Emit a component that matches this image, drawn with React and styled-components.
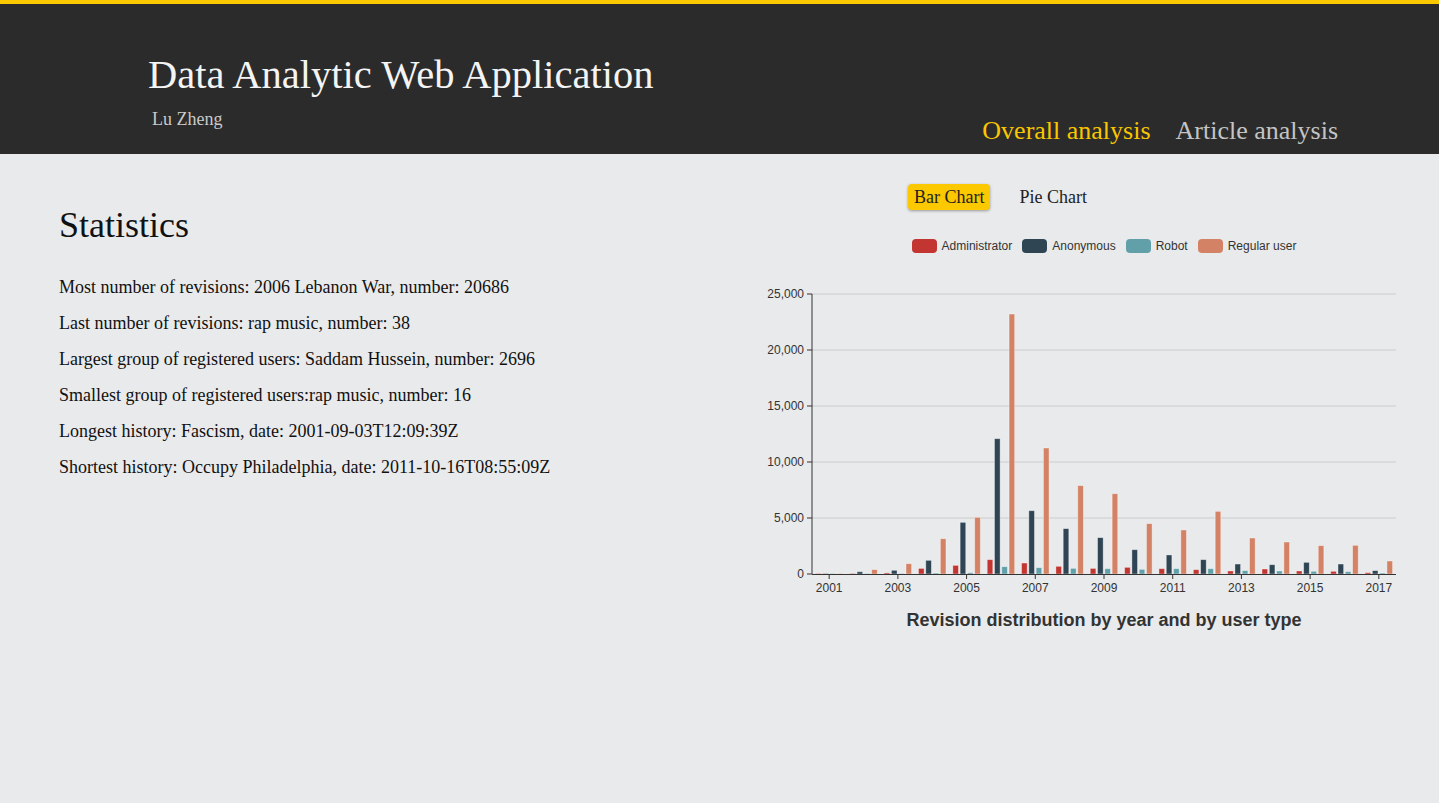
import React from 'react';
import styled, { createGlobalStyle } from 'styled-components';

const GlobalStyle = createGlobalStyle`
    html, body {
        margin: 0;
        padding: 0;
        background: #e9eaec;
        font-family: "Liberation Serif", "Times New Roman", serif;
        overflow: hidden;
    }
`;

const Page = styled.div`
    min-height: 100vh;
    background: #e9eaec;
`;

const Header = styled.header`
    border-top: 4px solid #fcc800;
    background-color: #2b2b2b;
    height: 154px;
    box-sizing: border-box;
    padding: 0 101px 0 148px;
    display: flex;
    justify-content: space-between;
    align-items: flex-end;
`;

const Brand = styled.div`
    align-self: flex-start;
    padding-top: 51px;
`;

const Title = styled.h1`
    margin: 0;
    font-weight: normal;
    font-size: 40.5px;
    line-height: 40px;
    color: #f4f4f4;
`;

const Author = styled.div`
    margin: 15px 0 0 4px;
    font-size: 18px;
    line-height: 18px;
    color: #c9c9c9;
`;

const Nav = styled.nav`
    display: flex;
    gap: 25px;
    padding-bottom: 10px;
`;

const NavLink = styled.a`
    font-size: 26px;
    line-height: 26px;
    color: ${({ active }) => (active ? '#f9c700' : '#c4c4c4')};
    cursor: pointer;
`;

const Main = styled.main`
    display: grid;
    grid-template-columns: 739px 1fr;
`;

const StatsColumn = styled.section`
    padding: 51px 0 0 59px;
`;

const StatsHeader = styled.h2`
    margin: 0 0 29px;
    font-weight: normal;
    font-size: 36px;
    line-height: 40px;
    color: #111;
`;

const StatsList = styled.div`
    display: flex;
    flex-direction: column;
    gap: 10px;
`;

const StatLine = styled.p`
    margin: 0;
    font-size: 18px;
    line-height: 26px;
    color: #111;
`;

const ChartColumn = styled.section`
    overflow: hidden;
    padding-top: 30px;
`;

const ChartArea = styled.div`
    width: 730px;
`;

const Tabs = styled.div`
    display: flex;
    gap: 23px;
    padding-left: 169px;
`;

const TabButton = styled.button`
    font-family: "Liberation Serif", "Times New Roman", serif;
    font-size: 18px;
    line-height: 26px;
    height: 26px;
    padding: 0 6px;
    border: none;
    border-radius: 4px;
    color: #222;
    background: ${({ active }) => (active ? '#fcc900' : 'transparent')};
    box-shadow: ${({ active }) => (active ? '0 1px 3px rgba(0, 0, 0, 0.35)' : 'none')};
    cursor: pointer;
`;

const Legend = styled.div`
    display: flex;
    justify-content: center;
    gap: 10px;
    margin-top: 29px;
    height: 14px;
`;

const LegendItem = styled.div`
    display: flex;
    align-items: center;
    gap: 5px;
    font-family: "Liberation Sans", Arial, sans-serif;
    font-size: 12px;
    color: #333;
`;

const Swatch = styled.span`
    width: 25px;
    height: 14px;
    border-radius: 4px;
    background: ${({ color }) => color};
`;

const ChartSvg = styled.svg`
    display: block;
    margin-top: 27px;
    font-family: "Liberation Sans", Arial, sans-serif;
`;

const ChartTitle = styled.div`
    margin-top: 9px;
    text-align: center;
    font-family: "Liberation Sans", Arial, sans-serif;
    font-weight: bold;
    font-size: 18px;
    line-height: 22px;
    color: #333;
`;

const series = [
    { name: 'Administrator', color: '#c23531', data: [5, 20, 100, 500, 770, 1280, 980, 685, 500, 595, 475, 385, 270, 445, 270, 240, 120] },
    { name: 'Anonymous', color: '#2f4554', data: [10, 200, 330, 1220, 4610, 12080, 5650, 4050, 3245, 2170, 1700, 1280, 890, 830, 1040, 890, 300] },
    { name: 'Robot', color: '#61a0a8', data: [5, 10, 10, 90, 120, 650, 565, 505, 475, 415, 475, 475, 300, 270, 240, 210, 90] },
    { name: 'Regular user', color: '#d48265', data: [30, 390, 920, 3150, 5060, 23210, 11250, 7890, 7170, 4495, 3930, 5595, 3215, 2855, 2530, 2560, 1160] },
];

const years = Array.from({ length: 17 }, (_, i) => 2001 + i);

const stats = [
    'Most number of revisions: 2006 Lebanon War, number: 20686',
    'Last number of revisions: rap music, number: 38',
    'Largest group of registered users: Saddam Hussein, number: 2696',
    'Smallest group of registered users:rap music, number: 16',
    'Longest history: Fascism, date: 2001-09-03T12:09:39Z',
    'Shortest history: Occupy Philadelphia, date: 2011-10-16T08:55:09Z',
];

const BarChart = () => {
    const left = 73;
    const right = 657;
    const top = 14;
    const base = 294;
    const max = 25000;
    const cat = (right - left) / years.length;
    const bw = (cat * 0.8) / 4.9;
    const gap = bw * 0.3;
    const y = (v) => base - (v / max) * (base - top);

    return (
        <ChartSvg width="730" height="320">
            {[0, 5000, 10000, 15000, 20000, 25000].map((v) => (
                <g key={v}>
                    {v > 0 && <line x1={left} x2={right} y1={y(v)} y2={y(v)} stroke="#ccc" />}
                    <line x1={left - 5} x2={left} y1={y(v)} y2={y(v)} stroke="#333" />
                    <text x={left - 8} y={y(v)} dy="4" textAnchor="end" fontSize="12" fill="#333">
                        {v.toLocaleString('en-US')}
                    </text>
                </g>
            ))}
            {years.map((yr, i) => {
                const start = left + i * cat + cat * 0.1;
                return series.map((s, j) => {
                    const h = Math.max(base - y(s.data[i]), 0.5);
                    return (
                        <rect
                            key={`${yr}-${j}`}
                            x={start + j * (bw + gap)}
                            y={base - h}
                            width={bw}
                            height={h}
                            fill={s.color}
                            stroke="rgba(255,255,255,0.45)"
                            strokeWidth="0.8"
                        />
                    );
                });
            })}
            <line x1={left} x2={left} y1={top} y2={base} stroke="#333" />
            <line x1={left} x2={right} y1={base + 0.5} y2={base + 0.5} stroke="#333" />
            {years.map((yr, i) =>
                i % 2 === 0 ? (
                    <g key={yr}>
                        <line
                            x1={left + (i + 0.5) * cat}
                            x2={left + (i + 0.5) * cat}
                            y1={base}
                            y2={base + 5}
                            stroke="#333"
                        />
                        <text x={left + (i + 0.5) * cat} y={base + 18} textAnchor="middle" fontSize="12" fill="#333">
                            {yr}
                        </text>
                    </g>
                ) : null
            )}
        </ChartSvg>
    );
};

const App = () => (
    <Page>
        <GlobalStyle />
        <Header>
            <Brand>
                <Title>Data Analytic Web Application</Title>
                <Author>Lu Zheng</Author>
            </Brand>
            <Nav>
                <NavLink active>Overall analysis</NavLink>
                <NavLink>Article analysis</NavLink>
            </Nav>
        </Header>
        <Main>
            <StatsColumn>
                <StatsHeader>Statistics</StatsHeader>
                <StatsList>
                    {stats.map((s) => (
                        <StatLine key={s}>{s}</StatLine>
                    ))}
                </StatsList>
            </StatsColumn>
            <ChartColumn>
                <ChartArea>
                    <Tabs>
                        <TabButton active>Bar Chart</TabButton>
                        <TabButton>Pie Chart</TabButton>
                    </Tabs>
                    <Legend>
                        {series.map((s) => (
                            <LegendItem key={s.name}>
                                <Swatch color={s.color} />
                                {s.name}
                            </LegendItem>
                        ))}
                    </Legend>
                    <BarChart />
                    <ChartTitle>Revision distribution by year and by user type</ChartTitle>
                </ChartArea>
            </ChartColumn>
        </Main>
    </Page>
);

export default App;
